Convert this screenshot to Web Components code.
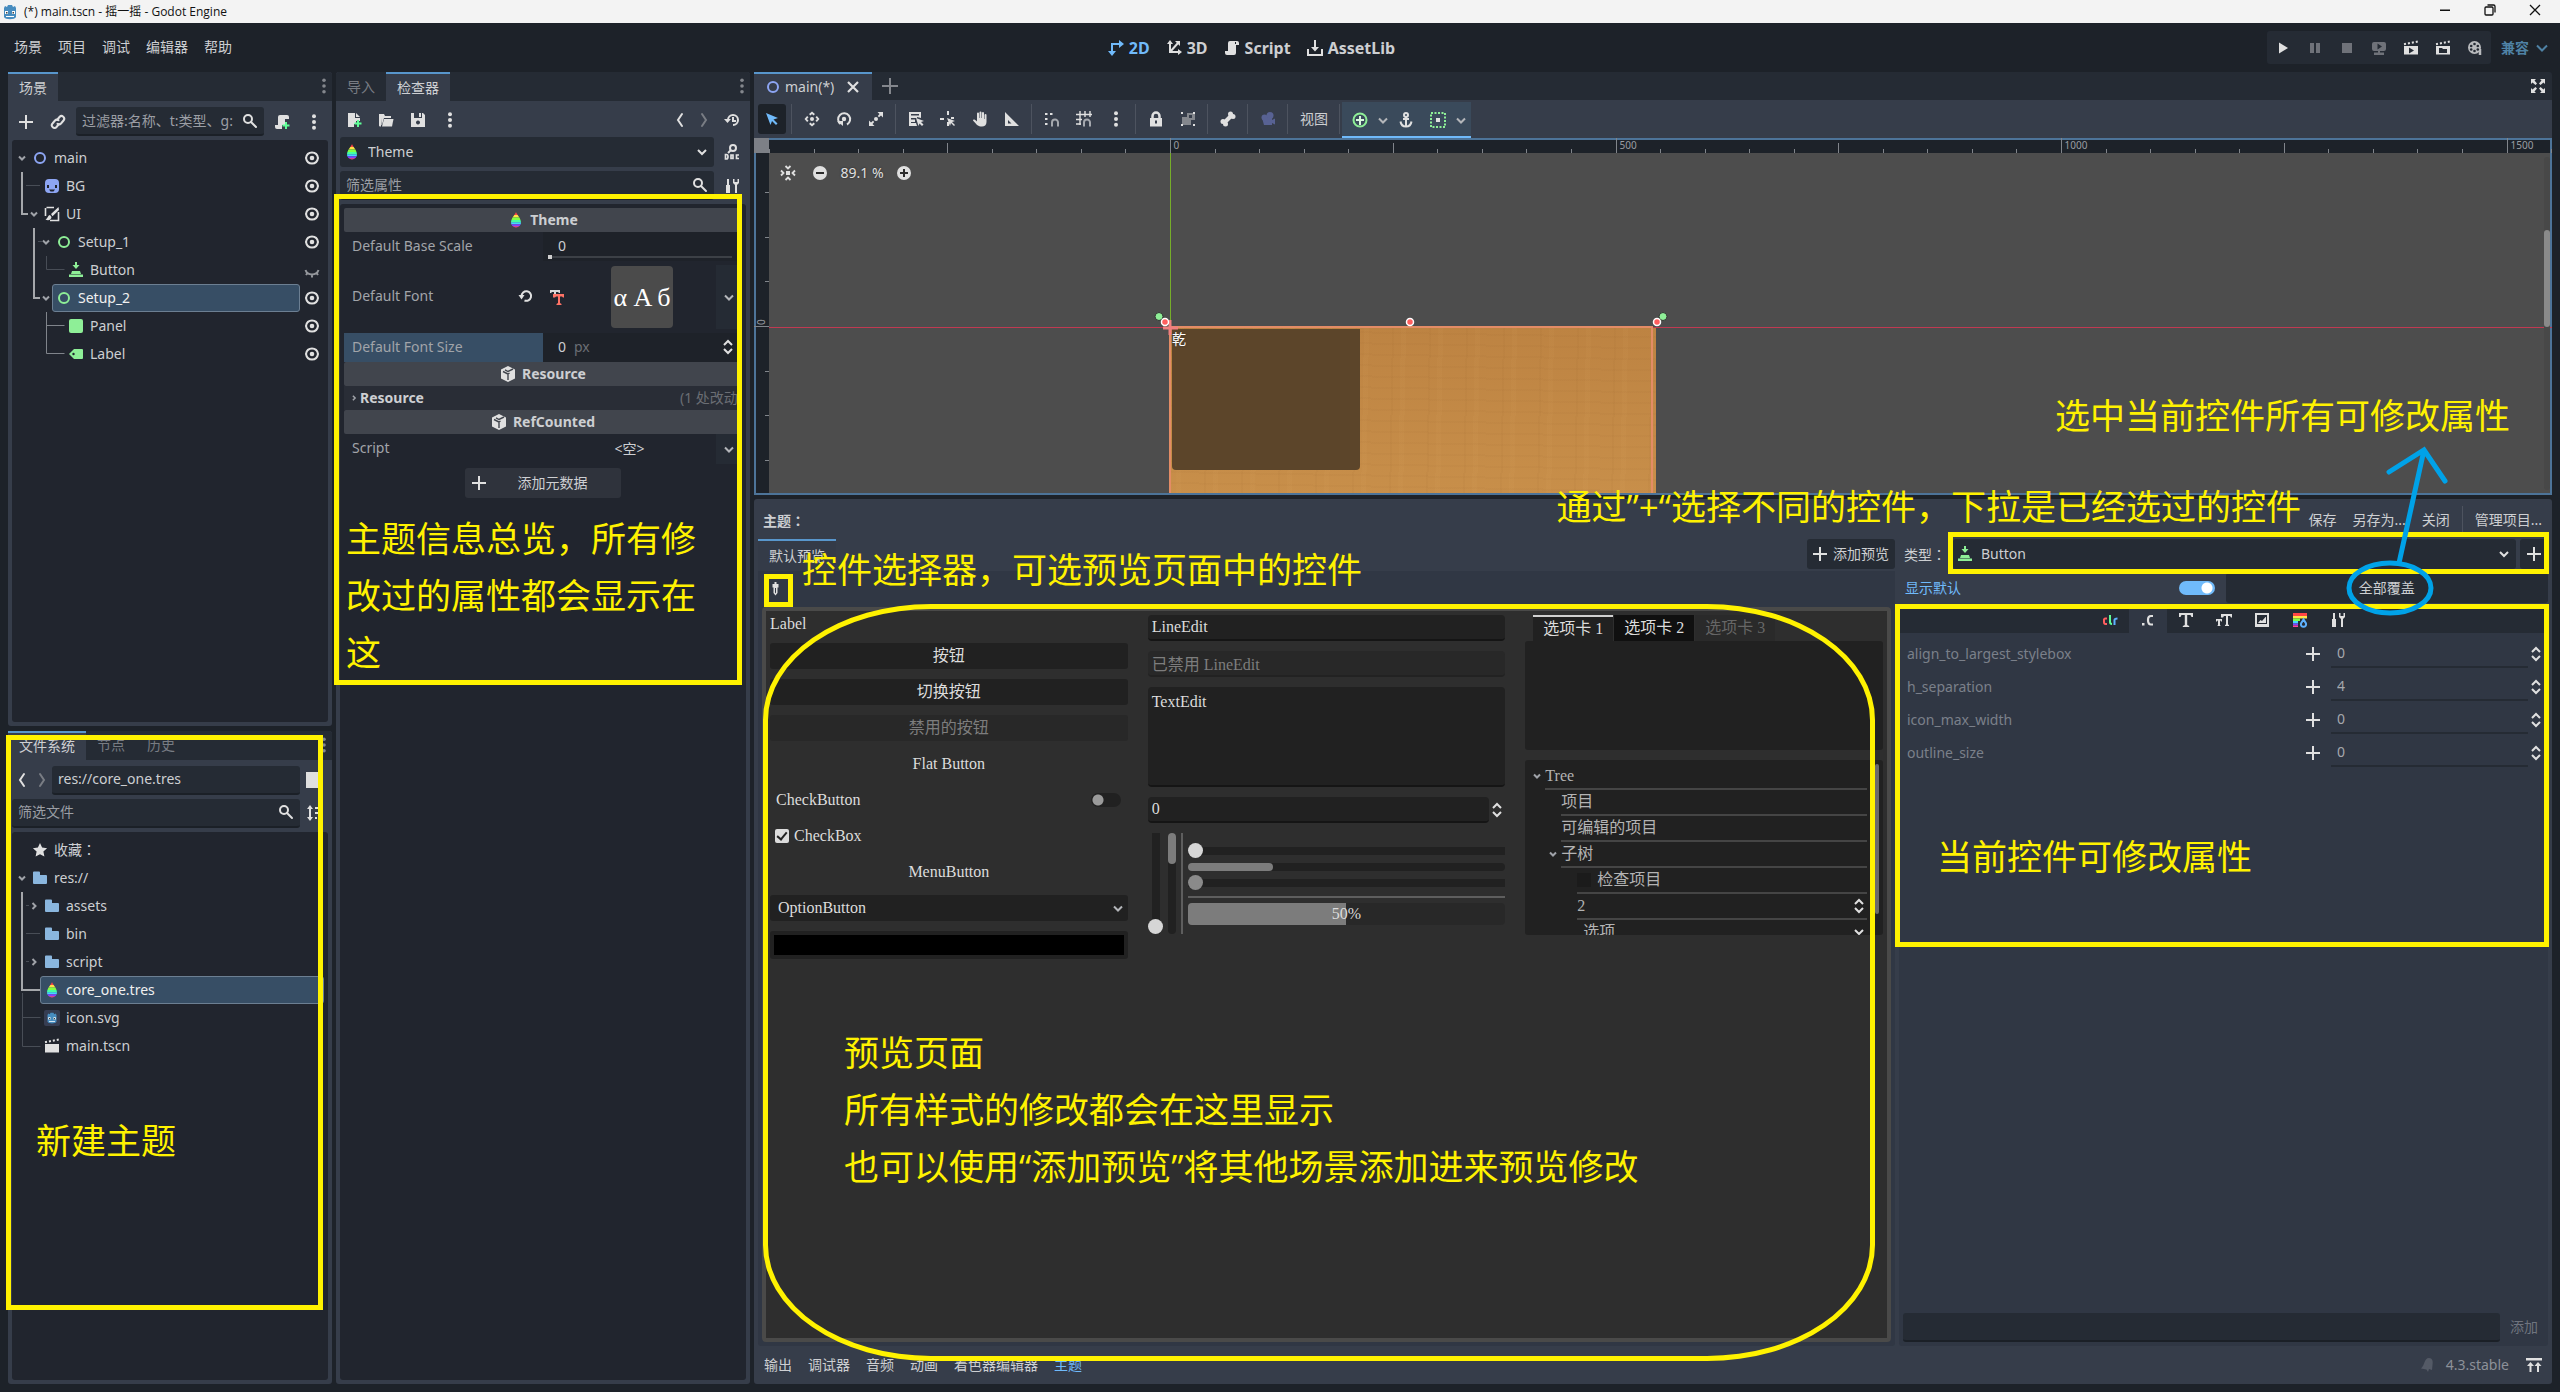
<!DOCTYPE html>
<html lang="zh-CN">
<head>
<meta charset="utf-8">
<title>(*) main.tscn - 摇一摇 - Godot Engine</title>
<style>
html,body{margin:0;height:100%}
body{background:#1d2229;color:#cdcfd2;font:14px/20px "Noto Sans","Noto Sans CJK SC",sans-serif;overflow:hidden}
</style>
</head>
<body>
<godot-editor></godot-editor>
<script>
const BASE = `
*{box-sizing:border-box}
:host{display:block}
button,input,select,textarea{font:inherit;color:inherit;background:none;border:0;margin:0;padding:0;outline:0;min-width:0;border-radius:0}
button{white-space:nowrap}
select{appearance:none}
input::placeholder{color:#9b9ea4;opacity:1}
.row{display:flex;align-items:center}
.grow{flex:1;min-width:0}
.colon{font-family:"Noto Sans CJK TC",sans-serif}
`;
const define = (tag, css, html) => customElements.define(tag, class extends HTMLElement {
  connectedCallback() {
    if (this.shadowRoot) return;
    const body = typeof html === 'function' ? html(this) : html;
    this.attachShadow({mode: 'open'}).innerHTML = `<style>${BASE}${css}</style>${body}`;
  }
});
/* full-width colon set in the middle of its cell */
const colon = '<span class="colon" lang="zh-TW">：</span>';

/* ---------- icons ---------- */
const W = '#e0e0e0';
const rainbow = id => `<defs><clipPath id="${id}"><path d="M8 0C7 3 3 6 3 10.500a5 5 0 0 0 10 0C13 6 9 3 8 0z"/></clipPath></defs><g clip-path="url(#${id})"><path fill="#ff4545" d="M0 0h16v3H0z"/><path fill="#ffe345" d="M0 3h16v2.500H0z"/><path fill="#80ff45" d="M0 5.500h16V8H0z"/><path fill="#45ffa2" d="M0 8h16v2.300H0z"/><path fill="#45d7ff" d="M0 10.300h16v2H0z"/><path fill="#8045ff" d="M0 12.300h16v2H0z"/><path fill="#ff4596" d="M0 14.300h16V16H0z"/></g>`;
const cube = `<path fill="${W}" d="M8 0l7 3.500v9L8 16l-7-3.500v-9z"/><path fill="none" stroke="#41454d" stroke-width="1.400" d="M8 14V8L3 5.500M5 3.800L8 5.500 13 3M8 8l1.500-1"/>`;
const magnet = x => `<path fill="none" stroke="#a5a8ae" stroke-width="2" d="M${x} 15.500v-4a3 3 0 0 1 6 0v4"/>`;
const clapper = `<path fill="${W}" d="M1 6h14v8.500H1z"/><path fill="none" stroke="${W}" stroke-width="2" stroke-dasharray="2 2" d="M1 4.200L15 1.500"/>`;
const robot = `<path fill="#478cbf" d="M2 4l1-2 2 1 1-2h4l1 2 2-1 1 2v9c-1 3-11 3-12 0z"/><path fill="#fff" d="M3 7h3v3H3zM10 7h3v3h-3zM4 12h8v1H4z"/><path fill="#414042" d="M4 8h1.500v1.500H4zM10.500 8H12v1.500h-1.500z"/>`;
const ICONS = {
  plus:`<path fill="${W}" d="M7 1h2v6h6v2H9v6H7V9H1V7h6z"/>`,
  link:`<g fill="none" stroke="${W}" stroke-width="2" stroke-linecap="round"><path d="M7 6l2.500-3a2.600 2.600 0 0 1 4 3.500L11 9.500a2.600 2.600 0 0 1-3.500.300"/><path d="M9 10l-2.500 3a2.600 2.600 0 0 1-4-3.500L5 6.500a2.600 2.600 0 0 1 3.500-.300"/></g>`,
  search:`<g fill="none" stroke="${W}" stroke-width="2"><circle cx="6" cy="6" r="4"/><path stroke-linecap="round" d="M9 9l5 5"/></g>`,
  scriptnew:`<path fill="${W}" d="M6 1a2 2 0 0 0-2 2v8H1v2a2 2 0 0 0 2 2h5v-4h3V5h4V3a2 2 0 0 0-2-2z"/><path fill="#5fff97" d="M11 8h2v2.500h2.500v2H13V15h-2v-2.500H8.500v-2H11z"/>`,
  script:`<path fill="${W}" d="M6 1a2 2 0 0 0-2 2v8H1v2a2 2 0 0 0 2 2h7a2 2 0 0 0 2-2V5h3V3a2 2 0 0 0-2-2z"/><path fill="#1d2229" d="M11 2h1v2h-1z"/>`,
  dots:`<g fill="${W}"><circle cx="8" cy="2.200" r="2"/><circle cx="8" cy="8" r="2"/><circle cx="8" cy="13.800" r="2"/></g>`,
  tabdots:`<g fill="#84878d"><circle cx="8" cy="2.200" r="1.800"/><circle cx="8" cy="8" r="1.800"/><circle cx="8" cy="13.800" r="1.800"/></g>`,
  eye:`<path fill="none" stroke="${W}" stroke-width="2" d="M8 2.500c3.500 0 5.500 2.500 6 5.500-.500 3-2.500 5.500-6 5.500S2.500 11 2 8c.500-3 2.500-5.500 6-5.500z"/><circle cx="8" cy="8" r="2.300" fill="${W}"/>`,
  closed:`<g fill="none" stroke="#94979c" stroke-width="2"><path d="M1.500 8c2 6 11 6 13 0M8 12.500v3M3.500 11l-1.500 2M12.500 11l1.500 2"/></g>`,
  node2d:`<circle cx="8" cy="8" r="5" fill="none" stroke="#8da5f3" stroke-width="2"/>`,
  control:`<circle cx="8" cy="8" r="5" fill="none" stroke="#8eef97" stroke-width="2"/>`,
  sprite:`<rect x="1" y="1" width="14" height="14" rx="4" fill="#8da5f3"/><path fill="#21252e" d="M3 7h2v3H3zM11 7h2v3h-2zM5 11.500h6l-1.500 2h-3z"/>`,
  canvas:`<path fill="none" stroke="${W}" stroke-width="1.600" d="M10 1.500H2.500M1.500 2v8M14.500 6v8.500H6"/><path fill="${W}" d="M14.500 1L7 8l1.500 2.200L15 4zM6 9c-2 0-2 3-4.500 4.500 2.500 1.500 6 .500 6-2.500z"/>`,
  button:`<path fill="#8eef97" d="M7 0h2v3h2.500L8 7 4.500 3H7zM4 9h8l1 3H3zM1 12.500h14V15H1z"/>`,
  panel:`<rect x="1" y="1" width="14" height="14" rx="2" fill="#8eef97"/>`,
  label:`<path fill="#8eef97" d="M6 3h8a1 1 0 0 1 1 1v8a1 1 0 0 1-1 1H6L1 8z"/><circle cx="5.500" cy="8" r="1.200" fill="#21252e"/>`,
  star:`<path fill="${W}" d="M8 1l2.100 4.600 5 .600-3.700 3.400 1 5L8 12.200l-4.400 2.400 1-5L.900 6.200l5-.600z"/>`,
  folder:`<path fill="#8ab6de" d="M2 1.500h5a1 1 0 0 1 1 1V5h6a1 1 0 0 1 1 1v7a1 1 0 0 1-1 1H2a1 1 0 0 1-1-1V2.500a1 1 0 0 1 1-1z"/>`,
  theme: rainbow('t'),
  godotfile:`<rect width="16" height="16" rx="2" fill="#363d52"/><g transform="translate(2 2) scale(.75)">${robot}</g>`,
  godot: robot,
  scene: clapper,
  filenew:`<path fill="${W}" d="M2 1h7v5h5v3h-4v3H8v3H2z"/><path fill="${W}" d="M10 1l4 4h-4z"/><path fill="#5fff97" d="M11 8h2v2.500h2.500v2H13V15h-2v-2.500H8.500v-2H11z"/>`,
  open:`<path fill="${W}" d="M1 2h5l1 2h6v2H6L4 13h-.500V6L3 14.500H2a1 1 0 0 1-1-1z"/><path fill="${W}" d="M6 7h9.500L14 14.500H4z"/>`,
  save:`<path fill="${W}" fill-rule="evenodd" d="M1 1h3v5h8V1h1l2 2v12H1zM8 8.500a2 2 0 1 0 .01 0zM9 1h2v4H9z"/>`,
  back:`<path fill="none" stroke="${W}" stroke-width="2" stroke-linecap="round" d="M10 2L6 8l4 6"/>`,
  fwd:`<path fill="none" stroke="#797d84" stroke-width="2" stroke-linecap="round" d="M6 2l4 6-4 6"/>`,
  history:`<path fill="none" stroke="${W}" stroke-width="2" d="M4 8a5 5 0 1 1 5 5M9 5v4h3"/><path fill="${W}" d="M0 7h7l-3.500 4z"/>`,
  doc:`<circle cx="9" cy="4" r="3" fill="none" stroke="${W}" stroke-width="2"/><path stroke="${W}" stroke-width="2" d="M7 6L4 9"/><path fill="none" stroke="${W}" stroke-width="1.700" d="M1.500 10.500V15h1c2 0 2-4.500 0-4.500zM7 11h2v3.500H7zM15 11h-2.500v3.500H15"/>`,
  tools:`<path fill="${W}" d="M3 1h2v6h1v8H2V7h1zM9 1v4l2 2v8h2V7l2-2V1h-1.500v3h-3V1z"/>`,
  revert:`<path fill="none" stroke="${W}" stroke-width="2" d="M3.500 8a4.800 4.800 0 1 1 3 4.500"/><path fill="${W}" d="M.500 7h6l-3 4.500z"/>`,
  fontred:`<path fill="#d8d8d8" d="M1 1h10v3h-1L9 3H7v4H5V3H3L2 4H1z"/><path fill="#ff7366" d="M4 5h11v3.500h-1L13 7.500h-2V14l1.500 1v1h-5v-1L9 14V7.500H7L6 8.500H4z"/>`,
  cube, updown:`<path fill="none" stroke="${W}" stroke-width="2" d="M4 6l4-4 4 4M4 10l4 4 4-4"/>`,
  chev:`<path fill="none" stroke="${W}" stroke-width="2" d="M4 6l4 4 4-4"/>`,
  chevmid:`<path fill="none" stroke="#b4b6ba" stroke-width="2" d="M4 6.500l4 4 4-4"/>`,
  chevdim:`<path fill="none" stroke="#a0a3a9" stroke-width="2" d="M5 6.500l3 3 3-3"/>`,
  chevblue:`<path fill="none" stroke="#4f82a5" stroke-width="2" d="M3 5.500l5 5 5-5"/>`,
  right:`<path fill="none" stroke="#a0a3a9" stroke-width="2" d="M6.500 5l3 3-3 3"/>`,
  file:`<path fill="${W}" d="M0 0h16v16H0z"/>`,
  sort:`<path fill="${W}" d="M4 0l3 4H5v8h2l-3 4-3-4h2V4H1zM9 2h6v2H9zM9 7h4v2H9zM9 12h2v2H9z"/>`,
  d2:`<path fill="none" stroke="#70bafa" stroke-width="2" d="M4 12V4h8"/><path fill="#70bafa" d="M11 0l5 4-5 4zM0 11h8l-4 5z"/>`,
  d3:`<path fill="none" stroke="${W}" stroke-width="2" d="M4 3v9h9M4 12l8-9"/><path fill="${W}" d="M1 4l3-4 3 4zM12 9l4 3-4 3zM9 1h5v5z"/>`,
  asset:`<path fill="${W}" d="M7 0h2v7h3l-4 4.500L4 7h3zM0 9h2v5h12V9h2v7H0z"/>`,
  close:`<path stroke="${W}" stroke-width="2.200" d="M3 3l10 10M13 3L3 13"/>`,
  plusdim:`<path fill="#84878d" d="M7 0h2v7h7v2H9v7H7V9H0V7h7z"/>`,
  select:`<path fill="#70bafa" d="M2 2l12 5-4.500 1.500 4 4-1.500 1.500-4-4L6.500 14z"/>`,
  move:`<circle cx="8" cy="8" r="2" fill="${W}"/><path fill="none" stroke="${W}" stroke-width="1.900" d="M5.700 3.800L8 1.800l2.300 2M5.700 12.200l2.300 2 2.300-2M3.800 5.700L1.800 8l2 2.300M12.200 5.700l2 2.300-2 2.300"/>`,
  rotate:`<path fill="none" stroke="${W}" stroke-width="2" d="M4.500 13A6 6 0 1 1 11 13.500"/><circle cx="8" cy="8" r="2.200" fill="${W}"/><path fill="${W}" d="M1 10h6v5z"/>`,
  scale:`<g fill="${W}"><circle cx="8" cy="8" r="2"/><path d="M9.500 1H15v5.500l-2-2-2 1.700L9.800 5l1.700-2zM6.500 15H1V9.500l2 2 2-1.700L6.200 11l-1.700 2z"/></g>`,
  list:`<path fill="${W}" fill-rule="evenodd" d="M1 1h12v6l-4-1v1H3v1.500h4V11H3v1h5l1 3H1zM3 3v1.500h8V3z"/><path fill="${W}" d="M8 7l8 3-3 1 2.500 2.500-1.500 1.500-2.500-2.500L10.500 15z"/>`,
  pivot:`<path fill="${W}" d="M7 0h2v4H7zM0 7h4v2H0zM7 11h2v4H7zM11 6h3v2h-3zM7 7l8 3-3 1 3 3-1 1-3-3-1 3z"/>`,
  hand:`<path fill="${W}" d="M5 2.500a1 1 0 0 1 2 0V7h.500V1.500a1 1 0 0 1 2 0V7h.500V2a1 1 0 0 1 2 0v6h.500V4a1 1 0 0 1 2 0v7c0 3-2 4.500-4.500 4.500C6 15.500 5 14 1 9.500c0-1.500 1.500-1.500 4 1z"/>`,
  rulertri:`<path fill="${W}" fill-rule="evenodd" d="M1 1l14 14H1zM4 9v3.500h3.500z"/>`,
  snap:`<path fill="${W}" d="M1 2h2.500v2H1zM6 2h2.500v2H6zM1 7h2.500v2H1zM1 12h2.500v2H1z"/>${magnet(8)}`,
  grid:`<path fill="none" stroke="${W}" stroke-width="1.400" d="M4 0v14M9 0v6M14 0v6M0 3.500h16M0 8.500h6M0 13h5"/>${magnet(8)}`,
  lock:`<path fill="none" stroke="${W}" stroke-width="2.500" d="M4.500 8V5a3.500 3.500 0 0 1 7 0v3"/><path fill="${W}" fill-rule="evenodd" d="M2 7h12v8.500H2zM7 9.500v3h2v-3z"/>`,
  group:`<path fill="#84878d" fill-rule="evenodd" d="M7 2h8v7h-4v5H2V6h5zM9 4v3h3V4z"/><path fill="${W}" d="M1 1h2v2H1zM13 1h2v2h-2zM1 13h2v2H1zM13 13h2v2h-2z"/>`,
  bone:`<path stroke="${W}" stroke-width="4" d="M4 12l8-8"/><g fill="${W}"><circle cx="3" cy="10.500" r="2.500"/><circle cx="5.500" cy="13" r="2.500"/><circle cx="10.500" cy="3" r="2.500"/><circle cx="13" cy="5.500" r="2.500"/></g>`,
  camera:`<g fill="#586293"><circle cx="10" cy="4.500" r="3.500"/><circle cx="4.500" cy="6.500" r="3"/><path d="M2 7h10v2l3-1.500v6L12 12v2H4z"/></g>`,
  anchorset:`<circle cx="8" cy="8" r="6.500" fill="none" stroke="#8eef97" stroke-width="2"/><path fill="#d8f8dc" d="M7 4h2v3h3v2H9v4H7V9H4V7h3z"/>`,
  anchor:`<g fill="none" stroke="${W}" stroke-width="2"><circle cx="8" cy="3" r="2"/><path d="M8 5v9M5 7h6M2.500 9.500C3 13 5 14.500 8 14.500s5-1.500 5.500-5"/></g>`,
  container:`<rect x="1" y="1" width="14" height="14" fill="none" stroke="#8eef97" stroke-width="2" stroke-dasharray="2 1.500"/><path fill="${W}" d="M6 6h4v4H6z"/>`,
  center:`<g fill="${W}"><path d="M6 6h4v4H6z"/></g><path fill="none" stroke="${W}" stroke-width="1.800" d="M5.500 1L8 3.500 10.500 1M5.500 15L8 12.500l2.500 2.500M1 5.500L3.500 8 1 10.500M15 5.500L12.500 8l2.500 2.500"/>`,
  minus:`<circle cx="8" cy="8" r="7" fill="${W}"/><path fill="#2b2b2b" d="M4 7h8v2H4z"/>`,
  zoomin:`<circle cx="8" cy="8" r="7" fill="${W}"/><path fill="#2b2b2b" d="M4 7h3V4h2v3h3v2H9v3H7V9H4z"/>`,
  play:`<path fill="${W}" d="M4 2.500l9 5.500-9 5.500z"/>`,
  pause:`<path fill="#6f7279" d="M3 3h4v10H3zM9 3h4v10H9z"/>`,
  stop:`<path fill="#6f7279" d="M3 3h10v10H3z"/>`,
  remote:`<path fill="#6f7279" fill-rule="evenodd" d="M3 2h10a2 2 0 0 1 2 2v5a2 2 0 0 1-2 2H9v1.500h4V15H3v-2.500h4V11H3a2 2 0 0 1-2-2V4a2 2 0 0 1 2-2zM6.500 3.500v6L11 6.500z"/>`,
  playscene:`${clapper}<path fill="#252b34" d="M6 7.500l5 3-5 3z"/>`,
  playcustom:`${clapper}<path fill="#252b34" d="M4 8h3l1 1h4v4H4z"/>`,
  movie:`<circle cx="7.500" cy="7.500" r="6.500" fill="#b9bbbe"/><path stroke="#b9bbbe" stroke-width="2.500" d="M13 9v6"/><g fill="#252b34"><circle cx="7.500" cy="4" r="1.300"/><circle cx="7.500" cy="11" r="1.300"/><circle cx="4.200" cy="6" r="1.300"/><circle cx="10.800" cy="6" r="1.300"/><circle cx="4.200" cy="9.500" r="1.300"/><circle cx="10.800" cy="9.500" r="1.300"/></g>`,
  expand:`<path fill="${W}" d="M1 1h5L4.500 2.500l2.500 3L5.500 7l-3-2.500L1 6zM15 1v5l-1.500-1.500-3 2.500L9 5.500l2.500-3L10 1zM1 15v-5l1.500 1.500 3-2.500L7 10.500l-2.500 3L6 15zM15 15h-5l1.500-1.500-2.500-3L10.500 9l3 2.500L15 10z"/>`,
  picker:`<path fill="${W}" fill-rule="evenodd" d="M6.500 1h2v2h2v3.500h-1V12l-2 2.500L5.500 12V6.500h-1V3h2zM7 7v4.500l.500 1 .500-1V7z"/>`,
  clr:`<g fill="none" stroke-width="2"><path stroke="#ff5f5f" d="M5 6.500H3.500a1.500 1.500 0 0 0-1.500 2v1.500c0 1 .500 2 1.500 2H5"/><path stroke="#5fff97" d="M8 3v7c0 1 .500 2 2 2"/><path stroke="#5fb2ff" d="M12.500 13V8c0-1 1-1.500 3-1.500"/></g>`,
  cst:`<path fill="${W}" d="M2 11h2.500v2.500H2z"/><path fill="none" stroke="${W}" stroke-width="2.200" d="M13 4h-2C8.500 4 8 5.500 8 8s.500 4.500 3 4.500h2"/>`,
  font:`<path fill="${W}" d="M1 1h14v4h-1.500L12.500 3H9.200v10l2 1v1H4.800v-1l2-1V3H3.500L2.500 5H1z"/>`,
  fontsize:`<path fill="${W}" d="M5 2h11v3.500h-1L14 4h-2v8.500l1 .500v1H9v-1l1-.500V4H8L7 5.500H5zM0 7h6v2.500H5L4.500 8.500H4V13l.500.500v.500h-3v-.500L2 13V8.500h-.500L1 9.500H0z"/>`,
  image:`<path fill="${W}" fill-rule="evenodd" d="M1 1h14v14H1zM3 3v9h10V3z"/><path fill="${W}" d="M4 11l2.500-3L8 9l3.500-4H12v6z"/>`,
  style:`<path fill="#ff4545" d="M1 1h14v3H1z"/><path fill="#ffe345" d="M1 4h14v2.500H1z"/><path fill="#80ff45" d="M1 6.500h7V9H1z"/><path fill="#45d7ff" d="M1 9h5v2.500H1z"/><path fill="#8045ff" d="M1 11.500h5v2H1z"/><path fill="#ff4596" d="M1 13.500h5V15H1z"/><path fill="none" stroke="#5fb2ff" stroke-width="2" d="M11.500 7.500l-2.500 4a2.600 2.600 0 1 0 5 0z"/>`,
  bell:`<path fill="#545a66" d="M9 1c4 0 4 4 3.500 7L12 13l-3-1-1 3-1.500-2.500L1 11.500C5 8 4 1 9 1z"/>`,
  pin:`<path fill="${W}" d="M0 1h16v2.500H0zM4.500 5l3.500 4H5.500v6h-2V9H1zM12 5l3.500 4H13v6h-2V9H8.500z"/>`,
  wmin:`<path fill="#111" d="M3 7.500h10v1.500H3z"/>`,
  wrest:`<g fill="none" stroke="#111" stroke-width="1.300"><rect x="3" y="5" width="8" height="8" rx="1"/><path d="M5.500 3h6a1.500 1.500 0 0 1 1.500 1.500v6"/></g>`,
  wclose:`<path stroke="#111" stroke-width="1.300" d="M3 3l10 10M13 3L3 13"/>`,
  none:''
};
define('g-icon', `:host{display:block;flex:none;width:16px;height:16px}svg{display:block;width:100%;height:100%}`,
  el => `<svg viewBox="0 0 16 16" aria-hidden="true">${ICONS[el.getAttribute('name')] || ''}</svg>`);
const ic = n => `<g-icon name="${n}"></g-icon>`;

/* square tool button that holds a single icon */
define('g-tool', `:host{flex:none}button{display:flex;align-items:center;justify-content:center;width:var(--w,28px);height:var(--h,28px)}
:host([active]) button{background:#1d2229;border-radius:3px}`,
  el => `<button type="button" aria-label="${el.getAttribute('name')}">${ic(el.getAttribute('name'))}</button>`);

define('g-field', `:host{flex:1;min-width:0}div{display:flex;align-items:center;height:29px;padding:0 6px;background:#252b34;border-bottom:2px solid #1b2027;border-radius:3px}input{flex:1;width:0}`,
  el => `<div><input aria-label="${el.getAttribute('label')}" placeholder="${el.getAttribute('placeholder') || ''}" value="${el.getAttribute('value') || ''}">${el.hasAttribute('icon') ? ic('search') : ''}</div>`);

define('g-select', `:host{flex:1;min-width:0}div{display:flex;align-items:center;height:30px;padding:0 4px;background:#252b34;border-radius:3px}select{flex:1;padding-left:8px;height:30px}`,
  el => `<div>${ic(el.getAttribute('icon'))}<select aria-label="${el.getAttribute('label')}"><option>${el.textContent}</option></select>${ic('chev')}</div>`);

/* ---------- window chrome ---------- */
define('title-bar', `:host{background:#f3f3f3;color:#111;height:23px;flex:none;font:12px/16px "Open Sans","Noto Sans CJK SC",sans-serif}
.bar{height:23px;padding:0 17px 0 2px}.t{margin-left:6px;flex:1}.w{gap:29px;height:20px;align-self:flex-start}`,
  `<div class="row bar">${ic('godot')}<span class="t">(*) main.tscn - 摇一摇 - Godot Engine</span><div class="row w">${ic('wmin')}${ic('wrest')}${ic('wclose')}</div></div>`);

define('menu-bar', `:host{height:49px;flex:none}.bar{height:49px;padding:0 8px;justify-content:space-between}
.m{gap:16px;padding:0 0 2px 6px}.c{padding:0 0 0 4px}.c button{display:flex;align-items:center;gap:5px;padding:0 8px;font:bold 16px/20px "Noto Sans","Noto Sans CJK SC",sans-serif}
.c .on{color:#70bafa}.run{background:#252b34;border-radius:3px;height:33px;--w:32px}.r{gap:10px}.r select{color:#4f82a5;font-weight:bold}.r label{gap:5px;width:51px}`,
  `<div class="row bar"><nav class="row m">${['场景','项目','调试','编辑器','帮助'].map(t => `<button>${t}</button>`).join('')}</nav>
  <div class="row c"><button class="on">${ic('d2')}2D</button><button>${ic('d3')}3D</button><button>${ic('script')}Script</button><button>${ic('asset')}AssetLib</button></div>
  <div class="row r"><div class="row run">${['play','pause','stop','remote','playscene','playcustom','movie'].map(n => `<g-tool name="${n}"></g-tool>`).join('')}</div>
  <label class="row"><select aria-label="渲染器"><option>兼容</option></select>${ic('chevblue')}</label></div></div>`);

/* ---------- docks ---------- */
define('dock-panel', `:host{display:flex;flex-direction:column;background:#363d4a;border-radius:3px;min-height:0}
.tabs{display:flex;height:29px;flex:none;background:#252b34;border-radius:3px 3px 0 0}
.tabs button{padding:0 11px;color:#787c83}.tabs .on{background:#363d4a;color:#cdcfd2;border-top:2px solid #5896cc}
.tabs g-icon{margin:6px 0 0 auto}.body{flex:1;min-height:0;display:flex;flex-direction:column;gap:4px;padding:6px 4px 4px}`,
  el => `<div class="tabs">${el.getAttribute('tabs').split(',').map(t => `<button class="${t[0] === '*' ? 'on' : ''}">${t.replace('*','')}</button>`).join('')}${ic('tabdots')}</div><div class="body"><slot></slot></div>`);

define('tree-row', `.r{display:flex;align-items:center;height:28px;padding-left:calc(6px + 12px*var(--d,0));padding-right:4px}
.a{width:8px;display:flex;justify-content:center}.i{flex:1;height:28px;margin-left:2px;display:flex;align-items:center;gap:6px;padding:0 3px;border:1px solid transparent;border-radius:3px;white-space:nowrap}
:host([selected]) .i{background:#374e65;border-color:#6c7f92;color:#f0f0f0}.e{margin:0 4px}`,
  el => { el.style.setProperty('--d', el.getAttribute('depth') || 0);
    const e = el.getAttribute('eye');
    return `<div class="r"><span class="a">${ic(el.getAttribute('arrow') || 'none')}</span><span class="i">${ic(el.getAttribute('icon'))}<span><slot></slot></span></span>${e ? `<g-icon class="e" name="${e}"></g-icon>` : ''}</div>`; });

define('tree-box', `:host{flex:1;position:relative;background:#21252e;border-radius:3px;padding-top:4px;min-height:0;overflow:hidden}
svg{position:absolute;left:0;top:0;width:100%;height:100%;fill:none}`,
  el => `<svg aria-hidden="true"><path stroke="#484d56" d="${el.getAttribute('dim')}"/><path stroke="#80848b" d="${el.getAttribute('thin') || ''}"/><path stroke="#a5a7ab" stroke-width="2" d="${el.getAttribute('bold')}"/></svg><slot></slot>`);

define('scene-dock', `:host{display:flex;flex:1;min-height:0}dock-panel{flex:1}.bar{gap:4px;height:29px;flex:none}`,
  `<dock-panel tabs="*场景"><div class="row bar"><g-tool name="plus"></g-tool><g-tool name="link"></g-tool><g-field icon label="过滤节点" placeholder="过滤器:名称、t:类型、g:"></g-field><g-tool name="scriptnew"></g-tool><g-tool name="dots"></g-tool></div>
  <tree-box dim="M14 45.500h14M26 101.500h4M34.500 116v13.500h18" thin="M34.500 172v41.500h18M34.500 185.500h18" bold="M10 32v42h6M22 88v70h6">
  <tree-row icon="node2d" arrow="chevdim" eye="eye">main</tree-row>
  <tree-row icon="sprite" depth="1" eye="eye">BG</tree-row>
  <tree-row icon="canvas" depth="1" arrow="chevdim" eye="eye">UI</tree-row>
  <tree-row icon="control" depth="2" arrow="chevdim" eye="eye">Setup_1</tree-row>
  <tree-row icon="button" depth="3" eye="closed">Button</tree-row>
  <tree-row icon="control" depth="2" arrow="chevdim" eye="eye" selected>Setup_2</tree-row>
  <tree-row icon="panel" depth="3" eye="eye">Panel</tree-row>
  <tree-row icon="label" depth="3" eye="eye">Label</tree-row></tree-box></dock-panel>`);

define('file-dock', `:host{display:flex;flex:1;min-height:0}dock-panel{flex:1}.row{height:29px;flex:none}.n{--w:20px}`,
  `<dock-panel tabs="*文件系统,节点,历史"><div class="row"><g-tool class="n" name="back"></g-tool><g-tool class="n" name="fwd"></g-tool><g-field label="路径" value="res://core_one.tres"></g-field><g-tool name="file"></g-tool></div>
  <div class="row"><g-field icon label="筛选文件" placeholder="筛选文件"></g-field><g-tool name="sort"></g-tool></div>
  <tree-box dim="M14 73.500h3M14 101.500h14M14 129.500h3M10.500 161v53.500h18M10.500 185.500h18" bold="M10 60v98h18">
  <tree-row icon="star">收藏${colon}</tree-row><tree-row icon="folder" arrow="chevdim">res://</tree-row>
  <tree-row icon="folder" depth="1" arrow="right">assets</tree-row><tree-row icon="folder" depth="1">bin</tree-row>
  <tree-row icon="folder" depth="1" arrow="right">script</tree-row><tree-row icon="theme" depth="1" selected>core_one.tres</tree-row>
  <tree-row icon="godotfile" depth="1">icon.svg</tree-row><tree-row icon="scene" depth="1">main.tscn</tree-row></tree-box></dock-panel>`);

define('prop-head', `:host{height:24px;background:#41454d;border-radius:2px;display:flex;align-items:center;justify-content:center;gap:6px;font-weight:bold;line-height:18px}`,
  el => `${ic(el.getAttribute('icon'))}<slot></slot>`);

define('prop-row', `:host{display:grid;grid-template-columns:1fr 1fr;color:#a1a4a9}.l{padding:0 0 2px 8px;display:flex;align-items:center}.v{display:flex;align-items:center;color:#cdcfd2}
:host([focus]) .l{background:#374e65}`,
  `<span class="l"><slot name="label"></slot></span><span class="v"><slot></slot></span>`);

define('inspector-dock', `:host{display:flex;min-height:0}dock-panel{flex:1}.row{flex:none;gap:4px}.bar{height:26px;--h:26px}.n{--w:20px}
.p{flex:1;background:#21252e;border-radius:3px;padding:4px;min-height:0}
prop-row{margin-bottom:4px}prop-row[focus]{margin-bottom:0}.h29{height:29px}.h64{height:64px}.h30{height:30px}.num{width:100%;height:29px;background:#1e2229;padding:0 0 2px 15px;display:flex;align-items:center;position:relative}
.num input[type=text]{width:16px}.num g-icon{margin:0 6px 0 auto}
.num input[type=range]{position:absolute;left:5px;bottom:1px;width:184px;height:7px;appearance:none;background:linear-gradient(#3c4046,#3c4046) center/100% 2px no-repeat}
input[type=range]::-webkit-slider-thumb{appearance:none;width:4px;height:4px;background:#cfcfcf}
.u{color:#6b6e74}.drop{width:26px;align-self:stretch;background:#252b34;display:flex;align-items:center;justify-content:center}
.prev{width:62px;height:62px;background:#4b4b4b;border-radius:4px;color:#fff;font:26px/64px "Liberation Serif",serif;white-space:nowrap;text-align:center;margin-right:43px}
.fold{height:24px;background:#292d36;padding:0 0 0 4px;gap:0;font-weight:bold}.fold span{margin-left:auto;font-weight:normal;color:#6b6e74}.fold g-icon{width:12px}
.meta{display:flex;align-items:center;margin:0 auto;width:156px;height:30px;background:#2f333c;border-radius:3px;padding:0 3px 0 6px}.meta b{flex:1;font-weight:normal}
.fl{display:flex;width:100%;align-items:center}.rv{margin-left:auto;margin-right:9px}.fi{margin:0 auto 0 6px}.empty{flex:1;text-align:center}`,
  `<dock-panel tabs="导入,*检查器"><div class="row bar"><g-tool name="filenew"></g-tool><g-tool name="open"></g-tool><g-tool name="save"></g-tool><g-tool name="dots"></g-tool><span class="grow"></span><g-tool class="n" name="back"></g-tool><g-tool class="n" name="fwd"></g-tool><g-tool name="history"></g-tool></div>
  <div class="row"><g-select icon="theme" label="资源">Theme</g-select><g-tool name="doc"></g-tool></div>
  <div class="row"><g-field icon label="筛选属性" placeholder="筛选属性"></g-field><g-tool name="tools"></g-tool></div>
  <div class="p"><prop-head icon="theme">Theme</prop-head>
  <prop-row class="h29"><label slot="label" for="bs">Default Base Scale</label><span class="num"><input id="bs" type="text" value="0"><input type="range" aria-label="Base Scale" value="0"></span></prop-row>
  <prop-row class="h64"><span slot="label" class="fl">Default Font<g-icon class="rv" name="revert"></g-icon></span><span class="fl h64"><g-icon name="fontred" class="fi"></g-icon><span class="prev">α A б</span><span class="drop">${ic('chevmid')}</span></span></prop-row>
  <prop-row class="h29" focus><label slot="label" for="fs">Default Font Size</label><span class="num"><input id="fs" type="text" value="0"><span class="u">px</span>${ic('updown')}</span></prop-row>
  <prop-head icon="cube">Resource</prop-head>
  <div class="row fold">${ic('right')}Resource<span>(1 处改动)</span></div>
  <prop-head icon="cube">RefCounted</prop-head>
  <prop-row class="h30"><span slot="label">Script</span><span class="fl h30"><span class="empty">&lt;空&gt;</span><span class="drop">${ic('chevmid')}</span></span></prop-row>
  <button class="meta">${ic('plus')}<b>添加元数据</b></button></div></dock-panel>`);

/* ---------- 2D canvas ---------- */
const ticks = () => {
  const step = 44.55, ox = 416, oy = 189; let s = '', t = '';
  for (let i = -9; i < 32; i++) { const x = Math.round(ox + i * step) + .5, h = i % 10 === 0 ? 15 : i % 5 === 0 ? 10 : 4;
    s += `M${x} 15v-${h}`; if (i % 10 === 0) t += `<text x="${x + 3}" y="11">${i * 50}</text>`; }
  for (let i = -3; i < 4; i++) { const y = Math.round(oy + i * step) - .5, w = i ? 4 : 15; s += `M15 ${y}h-${w}`; }
  return `<path stroke="#81858b" d="${s}"/>${t}<text transform="translate(11 187) rotate(-90)">0</text>`;
};
define('canvas-view', `:host{position:relative;min-height:0;flex:1;background:#4d4d4d;overflow:hidden}
.rt,.rl{position:absolute;left:0;top:0;background:#1d2229}.rt{right:0;height:15px}.rl{bottom:0;width:15px}.corner{position:absolute;width:15px;height:15px;background:#7d8086}
svg{position:absolute;inset:0;width:100%;height:100%;font:10px "Noto Sans",sans-serif;fill:#9a9da2}
.wood{position:absolute;left:416px;top:189px;width:486px;bottom:0;background:repeating-linear-gradient(91deg,rgba(120,70,20,.04) 0 2px,transparent 2px 9px,rgba(255,210,140,.03) 9px 14px,transparent 14px 37px),repeating-linear-gradient(1deg,rgba(110,60,20,.03) 0 2px,transparent 2px 11px),linear-gradient(#bd8342,#c88f4a)}
.dark{position:absolute;left:2px;top:2px;width:188px;height:141px;background:#5c452a;border-radius:0 0 4px 4px;color:#fff;line-height:20px;text-shadow:0 0 2px #333}
.zoom{position:absolute;left:20px;top:21px;gap:4px;color:#e0e0e0;text-shadow:0 0 2px #222}.zoom span{width:48px;text-align:center}
.edge{position:absolute;inset:0;border:2px solid #4d7499}.sb{position:absolute;right:2px;top:19px;bottom:5px;width:6px;background:#484848;border-radius:3px}.sb i{position:absolute;top:73px;height:97px;width:6px;background:#8a8a8a;border-radius:3px}`,
  () => `<div class="rt"></div><div class="rl"></div><div class="wood"><div class="dark">乾</div></div><div class="edge"></div>
  <svg>${ticks()}<path stroke="#76ad2a" d="M416.500 15v174"/><path stroke="#c03a52" d="M15 189.500h2600"/>
  <path stroke="#e38c66" stroke-width="2" fill="none" d="M416 355V189h482v166"/>
  <path stroke="#f07f7f" stroke-width="3" d="M409 190h15M416 182v15"/>
  <g stroke="#333" fill="#8eef97"><circle cx="405" cy="178.500" r="4"/><circle cx="909" cy="178.500" r="4"/></g>
  <g stroke="#fff" stroke-width="1.500" fill="#ff5f5f"><circle cx="411" cy="184" r="3.500"/><circle cx="656" cy="184" r="3.500"/><circle cx="903" cy="184" r="3.500"/></g></svg>
  <div class="corner"></div><div class="row zoom"><g-tool name="center"></g-tool><g-tool name="minus"></g-tool><span>89.1 %</span><g-tool name="zoomin"></g-tool></div><div class="sb"><i></i></div>`);

define('scene-view', `:host{display:flex;flex-direction:column;min-height:0}
.tabs{height:28px;background:#252b34;border-radius:3px 3px 0 0;flex:none;display:flex;--h:28px}.tab{display:flex;align-items:center;gap:4px;width:118px;padding:0 11px;background:#363d4a;border-top:2px solid #5896cc}
.tab g-icon:last-child{margin-left:auto}.new{--w:36px}
.bar{background:#363d4a;height:38px;flex:none;padding:4px;gap:4px;--h:30px}.s{width:4px;height:30px;background:linear-gradient(#4d535f,#4d535f) 1px 0/1px 100% no-repeat}
.v{width:40px}.ctx{margin-left:-4px;margin-top:-2px;height:36px;background:#3a4a5b;border-bottom:2px solid #70bafa;padding:2px 5px 0 4px;margin-bottom:-4px;gap:4px}.ctx .n{--w:12px;margin:0 -1px}`,
  () => { const t = n => `<g-tool name="${n}"></g-tool>`, s = '<span class="s"></span>';
  return `<div class="tabs"><div class="tab">${ic('node2d')}main(*)${ic('close')}</div><g-tool class="new" name="plusdim"></g-tool><span class="grow"></span>${t('expand')}</div>
  <div class="row bar"><g-tool name="select" active></g-tool>${s}${t('move')}${t('rotate')}${t('scale')}${s}${t('list')}${t('pivot')}${t('hand')}${t('rulertri')}${s}${t('snap')}${t('grid')}${t('dots')}${s}${t('lock')}${t('group')}${s}${t('bone')}${s}${t('camera')}${s}<button class="v">视图</button>${s}
  <div class="row ctx">${t('anchorset')}<g-tool class="n" name="chevmid"></g-tool>${t('anchor')}${t('container')}<g-tool class="n" name="chevmid"></g-tool></div></div><canvas-view></canvas-view>`; });

/* ---------- theme editor ---------- */
define('theme-preview', `:host{display:flex;flex:1;min-height:0;background:#2e2e2e;border:4px solid #4a4a49;border-radius:4px;padding:4px;gap:20px;font:16px/20px "Liberation Serif","Noto Sans CJK SC",serif;color:#dcdcdc;align-items:flex-start}
.c{flex:1;min-width:0;display:flex;flex-direction:column;gap:10px}.c>*{flex:none}
.lab{height:18px;line-height:18px}.b{height:26px;background:#212121;border-radius:3px}.flat{height:26px}.dis{background:#282828;color:#7d7d7d}
.ck{display:flex;align-items:center;height:26px;padding:0 7px 0 6px;justify-content:space-between}.tg{appearance:none;width:30px;height:14px;border-radius:7px;background:radial-gradient(circle at 7px 7px,#9a9a9a 5px,transparent 6px),#212121}
.cb{justify-content:flex-start;gap:5px;padding-left:5px}.cb input{appearance:none;width:14px;height:14px;border-radius:2px;background:#dcdcdc;position:relative}.cb input::after{content:"";position:absolute;left:4px;top:1px;width:4px;height:8px;border:solid #222;border-width:0 2px 2px 0;transform:rotate(40deg)}
.opt{display:flex;align-items:center;padding:0 2px 0 8px}.opt select{flex:1;height:26px}.col{height:28px;background:#212121;border-radius:3px;padding:4px}.col input{display:block;width:100%;height:20px;appearance:none;background:#000}
.e{height:26px;background:#212121;border-radius:4px;border-bottom:2px solid #151515;padding:0 4px;width:100%}.e.dis{background:#282828;border-color:#222}textarea.e{height:100px;padding:5px 4px;resize:none;display:block}
.sp{display:flex;align-items:center}.sp input{flex:1}
.sl{display:flex;height:101px;gap:4px}.vs{writing-mode:vertical-lr;direction:rtl;width:16px;height:101px}input[type=range]{appearance:none}
.hs{display:block;width:100%;height:16px;border-radius:4px;background:linear-gradient(#212121,#212121) center/100% 8px no-repeat}.vs{background:linear-gradient(#212121,#212121) center/8px 100% no-repeat}
input[type=range]::-webkit-slider-thumb{appearance:none;width:15px;height:15px;border-radius:8px;background:#d6d6d6}.hs.dim::-webkit-slider-thumb{background:#8a8a8a}
.vb{width:8px;border-radius:4px;background:#212121}.vb i{display:block;width:8px;height:31px;border-radius:4px;background:#7c7c7c}.vl{width:2px;background:#5e5e5e;margin:0 1px}
.h{flex:1;display:flex;flex-direction:column;justify-content:center;gap:4px;min-width:0}.hb{height:8px;border-radius:4px;background:#212121}.hb i{display:block;height:8px;width:27%;border-radius:4px;background:#7c7c7c}.hl{height:2px;margin:1px 0;background:#5e5e5e}
.pg{height:22px;border-radius:4px;background:linear-gradient(90deg,#7c7c7c 50%,#282828 50%);text-align:center;line-height:22px}
.tabs{display:flex;height:26px;padding-left:8px;gap:1px;margin-bottom:-10px}.tabs button{width:80px;background:#101010}.tabs .on{background:#212121;border-top:2px solid #d0d0d0}.tabs .off{background:#2a2a2a;color:#666}
.body{height:109px;background:#212121;border-radius:3px}
.tree{height:175px;background:#212121;border-radius:3px;overflow:hidden;padding:4px 16px 0 20px;position:relative;color:#b3b3b3}.tr{height:26px;margin-left:calc(var(--d)*16px);display:flex;align-items:center;border-bottom:2px solid #454545}
.ar{margin-left:-16px}.tsb{position:absolute;right:4px;top:4px;width:4px;height:150px;border-radius:2px;background:#6a6a6a}.bx{width:14px;height:14px;background:#1b1b1b;margin-right:6px;appearance:none}.end{margin-left:auto}.in{padding-left:6px}`,
  `<div class="c"><span class="lab">Label</span><button class="b">按钮</button><button class="b">切换按钮</button><button class="b dis" disabled>禁用的按钮</button><button class="flat">Flat Button</button>
  <label class="ck">CheckButton<input class="tg" type="checkbox"></label><label class="ck cb"><input type="checkbox" checked>CheckBox</label><button class="flat">MenuButton</button>
  <div class="b opt"><select aria-label="Option"><option>OptionButton</option></select>${ic('chevmid')}</div><div class="col"><input type="button" aria-label="Color"></div></div>
  <div class="c"><input class="e" aria-label="LineEdit" value="LineEdit"><input class="e dis" aria-label="disabled" disabled value="已禁用 LineEdit"><textarea class="e" aria-label="TextEdit">TextEdit</textarea>
  <div class="sp"><input class="e" aria-label="SpinBox" value="0">${ic('updown')}</div>
  <div class="sl"><input class="vs" type="range" aria-label="VSlider" value="0"><span class="vb"><i></i></span><span class="vl"></span><div class="h"><input class="hs" type="range" aria-label="HSlider" value="0"><div class="hb"><i></i></div><input class="hs dim" type="range" aria-label="HSlider disabled" value="0"><div class="hl"></div><div class="pg">50%</div></div></div></div>
  <div class="c"><div class="tabs"><button class="on">选项卡 1</button><button>选项卡 2</button><button class="off">选项卡 3</button></div><div class="body"></div>
  <div class="tree"><div class="tr" style="--d:0"><g-icon class="ar" name="chevdim"></g-icon>Tree</div><div class="tr" style="--d:1">项目</div><div class="tr" style="--d:1">可编辑的项目</div><div class="tr" style="--d:1"><g-icon class="ar" name="chevdim"></g-icon>子树</div><label class="tr" style="--d:2"><input class="bx" type="checkbox">检查项目</label><div class="tr" style="--d:2">2<g-icon class="end" name="updown"></g-icon></div><div class="tr" style="--d:2"><span class="in">选项</span><g-icon class="end" name="chev"></g-icon></div><i class="tsb"></i></div></div>`);

define('const-row', `.r{display:grid;grid-template-columns:1fr 28px 213px;gap:4px;align-items:center;height:29px}label{color:#7b808a;padding-left:4px}
.f{display:flex;align-items:center;height:29px}input{flex:1;height:29px;padding-left:6px;border-bottom:2px solid #252b34;color:#a5a8ad}`,
  el => `<div class="r"><label for="v">${el.getAttribute('name')}</label><g-tool name="plus"></g-tool><div class="f"><input id="v" value="${el.getAttribute('value')}">${ic('updown')}</div></div>`);

define('theme-items', `:host{display:flex;flex-direction:column;flex:0 0 649px;gap:4px}.row{flex:none}.ty{gap:4px;padding-left:5px}.ty label{width:45px;white-space:nowrap}.add{background:#252b34;border-radius:3px;--h:30px}
.two{display:grid;grid-template-columns:1fr 1fr;gap:4px;height:30px}.sw{display:flex;align-items:center;justify-content:space-between;padding:0 7px 0 6px;color:#70bafa}
.sw input{appearance:none;width:36px;height:14px;border-radius:7px;background:radial-gradient(circle at 28px 7px,#fff 5px,transparent 6px),#70bafa}
.ov{background:#252b34;border-radius:3px}.p{flex:1;background:#303744;border-radius:3px;padding:0 4px 4px;display:flex;flex-direction:column;gap:4px;min-height:0}
.tabs{display:flex;justify-content:center;background:#252b34;height:26px;margin:0 -4px 2px;--w:38px;--h:26px;flex:none}.tabs .on{background:#303744}
.bot{gap:4px;height:30px}.bot button{width:40px;color:#6f747e}`,
  `<div class="row ty"><label>类型${colon}</label><g-select icon="button" label="类型">Button</g-select><g-tool class="add" name="plus"></g-tool></div>
  <div class="two"><label class="sw">显示默认<input type="checkbox" checked></label><button class="ov">全部覆盖</button></div>
  <div class="p"><div class="tabs"><g-tool name="clr"></g-tool><g-tool class="on" name="cst"></g-tool><g-tool name="font"></g-tool><g-tool name="fontsize"></g-tool><g-tool name="image"></g-tool><g-tool name="style"></g-tool><g-tool name="tools"></g-tool></div>
  <const-row name="align_to_largest_stylebox" value="0"></const-row><const-row name="h_separation" value="4"></const-row><const-row name="icon_max_width" value="0"></const-row><const-row name="outline_size" value="0"></const-row>
  <span class="grow"></span><div class="row bot"><g-field label="新属性"></g-field><button disabled>添加</button></div></div>`);

define('theme-editor', `:host{display:flex;flex-direction:column;min-height:0;background:#363d4a;border-radius:3px;padding:6px 4px 0}
.head{height:30px;margin-bottom:4px;flex:none;padding:0 6px 0 5px;gap:16px}.head b{flex:1}.head i{width:1px;height:28px;background:#4d535f;margin:0 -4px}
.cols{flex:1;display:flex;gap:4px;min-height:0}.l{flex:1;min-width:0;display:flex;flex-direction:column}.tabs{display:flex;height:32px;justify-content:space-between;flex:none}
.tab{width:78px;border-top:2px solid #5896cc;background:#343b48}.ap{height:30px;background:#252b34;border-radius:3px;display:flex;align-items:center;gap:5px;padding:0 6px 0 5px}
.p{flex:1;min-height:0;background:#303744;border-radius:0 0 3px 3px;padding:0 4px 4px;display:flex;flex-direction:column}.pk{height:36px;padding:0;flex:none}
.foot{height:38px;flex:none;gap:16px;padding:0 6px}.foot .on{color:#70bafa}.foot .ver{margin-left:auto;gap:10px;color:#8d9199}.ver span{margin-right:7px}`,
  `<div class="row head"><b>主题${colon}</b><button>保存</button><button>另存为...</button><button>关闭</button><i></i><button>管理项目...</button></div>
  <div class="cols"><div class="l"><div class="tabs"><button class="tab">默认预览</button><button class="ap">${ic('plus')}添加预览</button></div>
  <div class="p"><div class="row pk"><g-tool name="picker"></g-tool></div><theme-preview></theme-preview></div></div><theme-items></theme-items></div>
  <div class="row foot"><button>输出</button><button>调试器</button><button>音频</button><button>动画</button><button>着色器编辑器</button><button class="on">主题</button><div class="row ver">${ic('bell')}<span>4.3.stable</span>${ic('pin')}</div></div>`);

/* ---------- hand-placed notes over the editor ---------- */
define('note-layer', `:host{position:absolute;inset:0;pointer-events:none;color:#fff200;font:35px/57px "Open Sans","Noto Sans CJK SC",sans-serif;overflow:hidden}
p,i,svg{position:absolute;margin:0;white-space:nowrap}i{border:5px solid #fff200}svg{right:0;top:0;width:260px;height:640px;fill:none;stroke:#00a2e8;stroke-width:5;stroke-linecap:round}`,
  `<i style="left:6px;top:735px;width:317px;height:575px"></i><i style="left:334px;top:194px;width:408px;height:491px"></i><i style="left:764px;top:574px;width:29px;height:33px"></i>
  <i style="left:763px;top:604px;right:685px;height:757px;border-radius:168px/116px"></i><i style="right:11px;top:532px;width:601px;height:42px"></i><i style="right:11px;top:604px;width:654px;height:343px"></i>
  <p style="left:36px;top:1112px">新建主题</p><p style="left:346px;top:510px;width:360px;white-space:normal">主题信息总览，所有修改过的属性都会显示在这</p>
  <p style="left:802px;top:541px">控件选择器，可选预览页面中的控件</p><p style="left:844px;top:1024px">预览页面<br>所有样式的修改都会在这里显示<br>也可以使用“添加预览”将其他场景添加进来预览修改</p>
  <p style="right:50px;top:387px">选中当前控件所有可修改属性</p><p style="right:259px;top:478px">通过”+“选择不同的控件，下拉是已经选过的控件</p><p style="right:308px;top:828px">当前控件可修改属性</p>
  <svg><ellipse cx="90" cy="588" rx="41" ry="25"/><path d="M99 563l25-113M89 472l35-22 21 31"/></svg>`);

define('godot-editor', `:host{display:flex;flex-direction:column;height:100vh;position:relative}
main{flex:1;min-height:0;display:grid;grid-template-columns:324px 414px minmax(0,1fr);gap:4px;padding:0 8px 8px}.c{display:flex;flex-direction:column;min-height:0;gap:5px}.m{display:grid;grid-template-rows:423fr 885fr;grid-template-columns:minmax(0,1fr);gap:4px;min-height:0}`,
  `<title-bar></title-bar><menu-bar></menu-bar><main><div class="c"><scene-dock></scene-dock><file-dock></file-dock></div><inspector-dock></inspector-dock><div class="m"><scene-view></scene-view><theme-editor></theme-editor></div></main><note-layer></note-layer>`);
</script>
</body>
</html>
